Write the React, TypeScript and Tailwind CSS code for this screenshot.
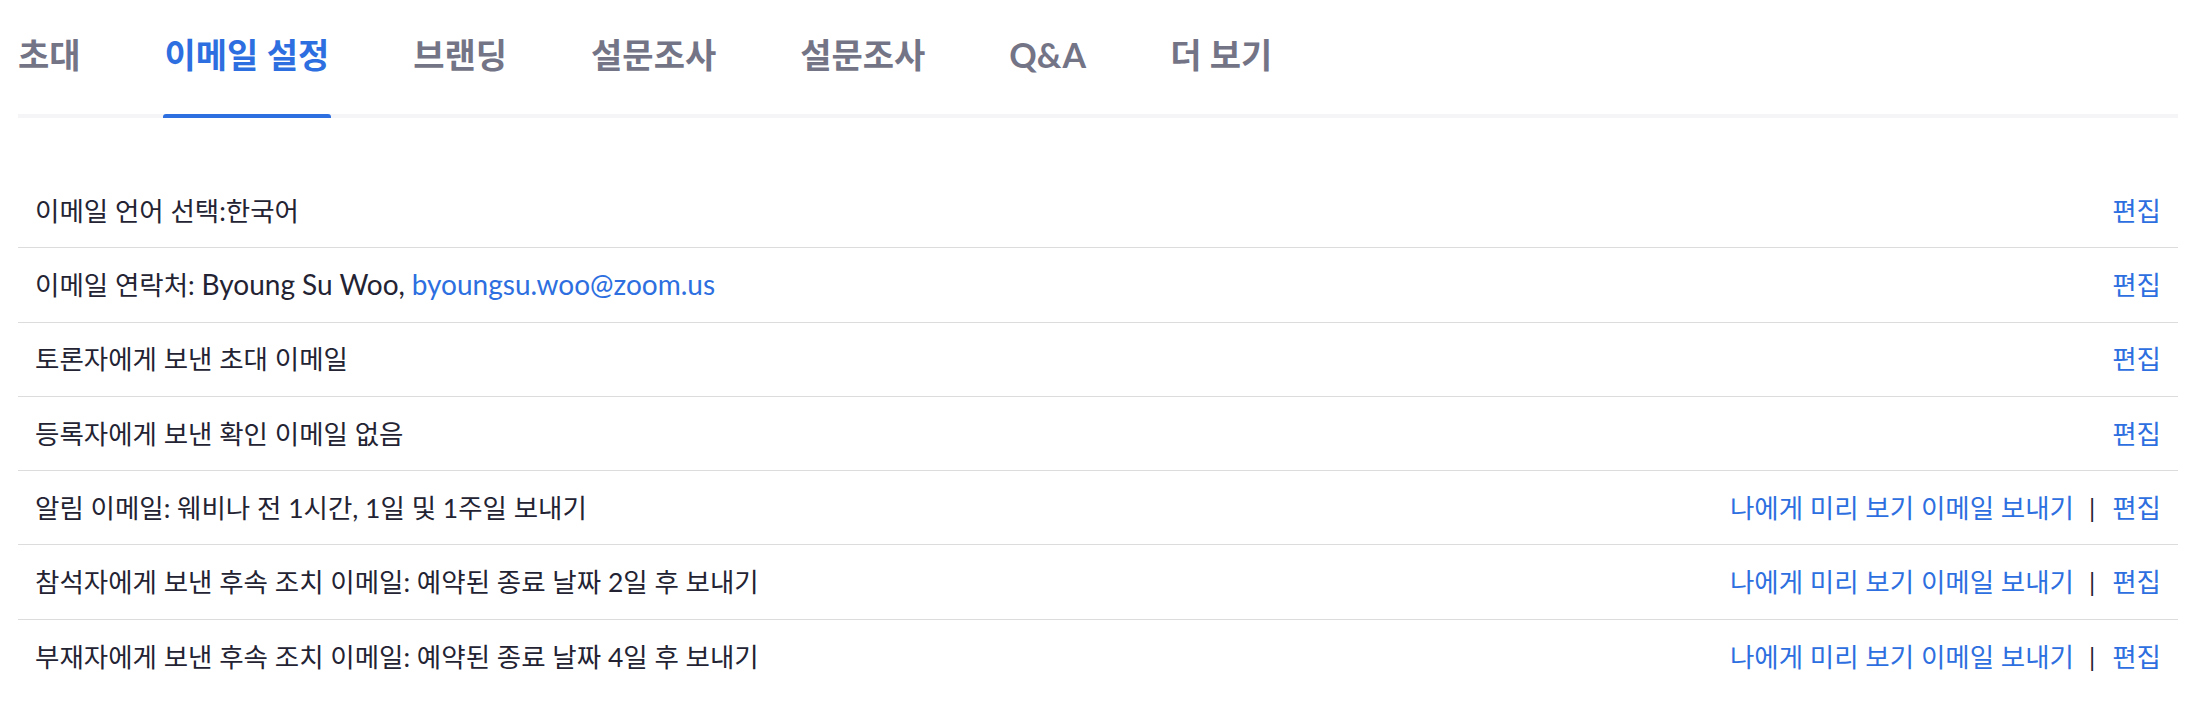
import type { ReactNode } from 'react';

const tabs = ['초대', '이메일 설정', '브랜딩', '설문조사', '설문조사', 'Q&A', '더 보기'];

type Row = {
  label: ReactNode;
  preview?: boolean;
};

const rows: Row[] = [
  { label: '이메일 언어 선택:한국어' },
  {
    label: (
      <>
        이메일 연락처: <span className="text-[28px]">Byoung Su Woo,</span>{' '}
        <span className="text-[28px] text-[#2d6fe0]">byoungsu.woo@zoom.us</span>
      </>
    ),
  },
  { label: '토론자에게 보낸 초대 이메일' },
  { label: '등록자에게 보낸 확인 이메일 없음' },
  { label: '알림 이메일: 웨비나 전 1시간, 1일 및 1주일 보내기', preview: true },
  { label: '참석자에게 보낸 후속 조치 이메일: 예약된 종료 날짜 2일 후 보내기', preview: true },
  { label: '부재자에게 보낸 후속 조치 이메일: 예약된 종료 날짜 4일 후 보내기', preview: true },
];

export default function App() {
  const active = 1;

  return (
    <div className="min-h-[710px] bg-white pl-[18px] pr-[34px] font-['Lato','Noto_Sans_CJK_KR',sans-serif]">
      {/* 탭 */}
      <nav className="flex gap-[84px] border-b-4 border-[#f5f5f7] pt-[31px]">
        {tabs.map((tab, index) => (
          <div
            key={index}
            className={`relative pb-[35px] text-[34px] leading-[48px] font-bold ${
              index === active ? 'text-[#2d6fe0]' : 'text-[#747487]'
            }`}
          >
            {tab}
            {index === active && (
              <span className="absolute -bottom-[4px] -left-[2px] -right-[2px] h-[4px] rounded-t-[3px] bg-[#2d6fe0]" />
            )}
          </div>
        ))}
      </nav>

      {/* 이메일 설정 목록 */}
      <div className="mt-[56px]">
        {rows.map((row, index) => (
          <div
            key={index}
            className="flex h-[74.3px] items-center justify-between border-b border-[#dcdcdc] px-[17px] text-[26.5px] leading-[36px] text-[#232333] last:border-b-0"
          >
            <div>{row.label}</div>
            <div className="flex items-center text-[26.5px] text-[#2d6fe0]">
              {row.preview && (
                <>
                  <span>나에게 미리 보기 이메일 보내기</span>
                  <span className="ml-[15px] mr-[17px] text-[25px] text-[#232333]">|</span>
                </>
              )}
              <span>편집</span>
            </div>
          </div>
        ))}
      </div>
    </div>
  );
}
